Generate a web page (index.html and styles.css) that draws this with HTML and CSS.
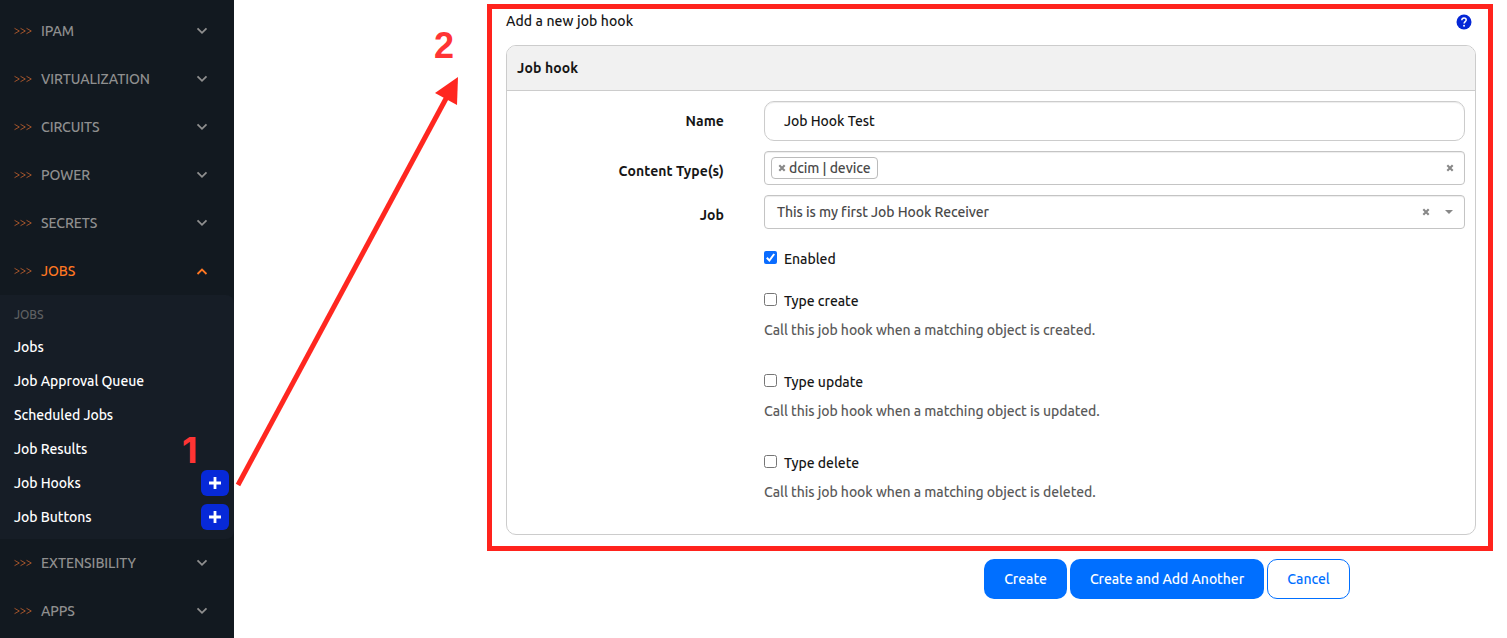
FILE: index.html
```
<!DOCTYPE html>
<html lang="en">
<head>
<meta charset="utf-8">
<title>Add a new job hook</title>
<link rel="stylesheet" href="styles.css">
</head>
<body>
<svg class="defs" width="0" height="0">
  <symbol id="arrows" viewBox="0 0 18 8"><path d="M.5 1.300l4.800 2.700L.5 6.700M6.500 1.300l4.800 2.700-4.800 2.700M12.500 1.300l4.800 2.700-4.800 2.700" fill="none" stroke="#b05a2c" stroke-width=".9"/></symbol>
  <symbol id="down" viewBox="0 0 12 8"><path d="M1.500 1.300L6 5.800l4.500-4.500" fill="none" stroke="currentColor" stroke-width="1.800"/></symbol>
  <symbol id="up" viewBox="0 0 12 8"><path d="M1.500 7L6 2.500 10.500 7" fill="none" stroke="currentColor" stroke-width="1.800"/></symbol>
  <symbol id="plus" viewBox="0 0 12 12"><path d="M6 0v12M0 6h12" stroke="#fff" stroke-width="2.800"/></symbol>
  <symbol id="cross" viewBox="0 0 8 8"><path d="M1.300 1.300l5.400 5.400M6.700 1.300L1.300 6.700" stroke="#888" stroke-width="2.100"/></symbol>
</svg>
<div class="page">
  <nav class="sidebar">
    <div class="group"><svg class="arrows"><use href="#arrows"/></svg><span>IPAM</span><svg class="chev"><use href="#down"/></svg></div>
    <div class="group"><svg class="arrows"><use href="#arrows"/></svg><span>VIRTUALIZATION</span><svg class="chev"><use href="#down"/></svg></div>
    <div class="group"><svg class="arrows"><use href="#arrows"/></svg><span>CIRCUITS</span><svg class="chev"><use href="#down"/></svg></div>
    <div class="group"><svg class="arrows"><use href="#arrows"/></svg><span>POWER</span><svg class="chev"><use href="#down"/></svg></div>
    <div class="group"><svg class="arrows"><use href="#arrows"/></svg><span>SECRETS</span><svg class="chev"><use href="#down"/></svg></div>
    <div class="group active"><svg class="arrows"><use href="#arrows"/></svg><span>JOBS</span><svg class="chev"><use href="#up"/></svg></div>
    <div class="submenu">
      <div class="heading">JOBS</div>
      <div class="item"><span>Jobs</span></div>
      <div class="item"><span>Job Approval Queue</span></div>
      <div class="item"><span>Scheduled Jobs</span></div>
      <div class="item"><span>Job Results</span></div>
      <div class="item"><span>Job Hooks</span><span class="add"><svg><use href="#plus"/></svg></span></div>
      <div class="item"><span>Job Buttons</span><span class="add"><svg><use href="#plus"/></svg></span></div>
    </div>
    <div class="group"><svg class="arrows"><use href="#arrows"/></svg><span>EXTENSIBILITY</span><svg class="chev"><use href="#down"/></svg></div>
    <div class="group"><svg class="arrows"><use href="#arrows"/></svg><span>APPS</span><svg class="chev"><use href="#down"/></svg></div>
  </nav>
  <main class="main">
    <header class="title"><span>Add a new job hook</span>
      <svg class="help" viewBox="0 0 16 16"><circle cx="8" cy="8" r="7.500" fill="#0527d6"/><path d="M5.800 6.200c0-1.300.9-2.200 2.200-2.200s2.200.9 2.200 2c0 1.600-2.100 1.700-2.100 3.500" fill="none" stroke="#fff" stroke-width="1.500"/><circle cx="8.050" cy="11.700" r=".95" fill="#fff"/></svg>
    </header>
    <section class="panel">
      <div class="panel-head">Job hook</div>
      <div class="panel-body">
        <div class="row"><label>Name</label><div class="input">Job Hook Test</div></div>
        <div class="row short"><label>Content Type(s)</label><div class="select"><div class="tag"><svg class="cross"><use href="#cross"/></svg><span>dcim | device</span></div><svg class="cross end"><use href="#cross"/></svg></div></div>
        <div class="row short"><label>Job</label><div class="select single"><span>This is my first Job Hook Receiver</span><svg class="cross mid"><use href="#cross"/></svg><svg class="caret" viewBox="0 0 8 4"><path d="M0 0h8L4 4z" fill="#888"/></svg></div></div>
        <div class="checks">
          <div class="check"><svg class="box" viewBox="0 0 13 13"><rect width="13" height="13" rx="2" fill="#0a6cff"/><path d="M2.800 6.800l2.600 2.700L10.200 3" fill="none" stroke="#fff" stroke-width="2"/></svg><span>Enabled</span></div>
          <div class="check"><span class="box empty"></span><span>Type create</span></div>
          <p>Call this job hook when a matching object is created.</p>
          <div class="check"><span class="box empty"></span><span>Type update</span></div>
          <p>Call this job hook when a matching object is updated.</p>
          <div class="check"><span class="box empty"></span><span>Type delete</span></div>
          <p>Call this job hook when a matching object is deleted.</p>
        </div>
      </div>
    </section>
    <footer class="actions">
      <div class="btn small">Create</div>
      <div class="btn wide">Create and Add Another</div>
      <div class="btn small outline">Cancel</div>
    </footer>
  </main>
  <div class="frame"></div>
  <svg class="pointer" viewBox="0 0 1507 638"><path d="M238 485L449 93" stroke="#ff2720" stroke-width="5"/><path d="M458 77l-1 28-22-12z" fill="#ff2720"/></svg>
  <div class="step one">1</div>
  <div class="step two">2</div>
</div>
</body>
</html>
```
FILE: styles.css
```
* { box-sizing: border-box; }
body { margin: 0; background: #fff; color: #161616; font: 500 14px/20px Ubuntu, "Noto Sans", sans-serif; font-variant-ligatures: none; }
.defs { position: absolute; }
.page { position: relative; display: flex; width: 1507px; height: 638px; overflow: hidden; }
span { white-space: nowrap; }
svg { flex: none; display: block; }

.sidebar { flex: none; width: 234px; padding-top: 7px; background: #121920; letter-spacing: -.05px; }
.group { display: flex; align-items: center; height: 48px; padding: 0 26px 0 14px; color: #8f8f8f; }
.group span { letter-spacing: -.1px; }
.group .arrows { width: 18px; height: 8px; margin-right: 9px; }
.group .chev { width: 12px; height: 8px; margin-left: auto; }
.group.active { color: #ff7722; }
.submenu { height: 244px; padding: 5px 5px 5px 14px; background: #161d26; border-radius: 0 8px 8px 0; color: #fff; }
.heading { display: flex; align-items: center; height: 30px; font-size: 12px; color: #5f6062; }
.item { display: flex; align-items: center; justify-content: space-between; height: 34px; }
.add { display: flex; align-items: center; justify-content: center; width: 28px; height: 26px; border-radius: 6px; background: #0729d8; }
.add svg { width: 12px; height: 12px; margin-bottom: 1px; }

.main { width: 970px; margin-left: 272px; padding-top: 11px; }
.title { display: flex; align-items: center; justify-content: space-between; height: 20px; padding-right: 4px; letter-spacing: .1px; }
.help { width: 16px; height: 16px; margin-top: 2px; }
.panel { height: 490px; margin-top: 14px; border: 1px solid #ccc; border-radius: 10px; overflow: hidden; }
.panel-head { display: flex; align-items: center; height: 45px; padding-left: 10px; background: #f1f1f1; border-bottom: 1px solid #ccc; font-weight: 700; letter-spacing: .12px; }
.panel-body { padding: 10px 10px 0 0; }
.row { display: grid; grid-template-columns: 217px 701px; column-gap: 40px; align-items: center; margin-bottom: 10px; }
.row label { text-align: right; font-weight: 700; letter-spacing: .08px; }
.row.short label { padding-top: 6px; }
.input { display: flex; align-items: center; height: 40px; padding-left: 19px; border: 1px solid #ccc; border-radius: 10px; box-shadow: inset 0 1px 1px #00000013; letter-spacing: -.04px; }
.select { display: flex; align-items: center; height: 34px; padding: 0 10px 0 6px; border: 1px solid #c4c4c4; border-radius: 4px; color: #4a4a4a; box-shadow: inset 0 1px 1px #00000013; letter-spacing: -.07px; }
.single { padding: 0 11px 0 12px; }
.tag { display: flex; align-items: center; gap: 3px; width: 107px; height: 22px; padding-left: 6px; border: 1px solid #bbb; border-radius: 4px; }
.cross { width: 8px; height: 8px; }
.end, .mid { margin-left: auto; }
.single .mid { margin-right: 15px; }
.caret { width: 8px; height: 4px; }
.checks { display: flex; flex-direction: column; padding: 9px 0 0 257px; letter-spacing: -.03px; }
.check { display: flex; align-items: center; gap: 7px; height: 22px; margin-bottom: 20px; }
.box { width: 13px; height: 13px; flex: none; margin-top: -3px; }
.empty { border: 1px solid #767676; border-radius: 2.500px; }
.check:not(:first-child) { margin-bottom: 7px; }
.checks p { height: 22px; line-height: 22px; margin: 0 0 30px; color: #5a5a5a; letter-spacing: -.06px; }

.actions { display: flex; gap: 3px; margin: 24px 0 0 478px; color: #fff; }
.btn { display: flex; align-items: center; justify-content: center; height: 40px; border-radius: 10px; background: #006fff; letter-spacing: -.05px; }
.small { width: 83px; }
.wide { width: 194px; }
.outline { color: #006fff; background: #fff; border: 1px solid #006fff; }

.frame { position: absolute; left: 487px; top: 4px; width: 1006px; height: 547px; border: 5px solid #ff231d; }
.pointer { position: absolute; left: 0; top: 0; width: 1507px; height: 638px; }
.step { position: absolute; font: 700 36px/40px "Liberation Sans", sans-serif; color: #ff3434; }
.one { left: 182px; top: 430px; font-family: Inter, sans-serif; }
.two { left: 434px; top: 26px; }
```
